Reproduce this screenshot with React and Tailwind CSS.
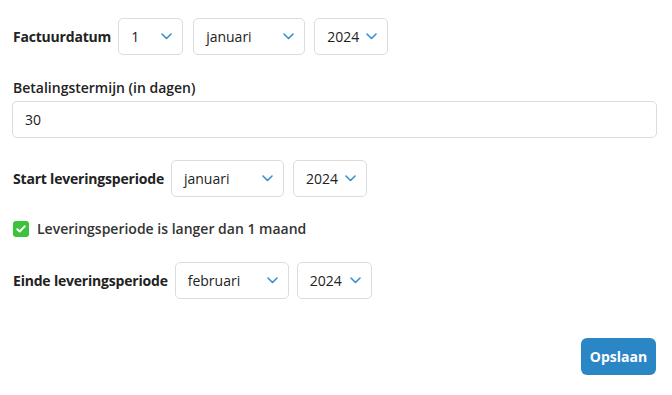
const Chevron = () => (
  <svg width="11" height="7" viewBox="0 0 11 7" className="shrink-0">
    <path d="M1 1l4.5 4.5L10 1" fill="none" stroke="#3a8fd0" strokeWidth="1.6" strokeLinecap="round" strokeLinejoin="round" />
  </svg>
);

const Select = ({ value, width }) => (
  <div
    className={`${width} h-[37px] flex items-center justify-between pl-3 pr-[10px] border border-[#dcdcdc] rounded-[5px] bg-white text-[14px] text-[#222]`}
  >
    <span>{value}</span>
    <Chevron />
  </div>
);

export default function App() {
  return (
    <div className="w-[672px] h-[395px] bg-white px-[12px] pt-[18px] font-['Open_Sans',sans-serif] text-[#222] flex flex-col">
      <div className="flex items-center">
        <span className="text-[14px] font-bold tracking-[-0.2px] ml-px mr-[7px]">Factuurdatum</span>
        <div className="flex">
          <Select value="1" width="w-[65px] mr-[10px]" />
          <Select value="januari" width="w-[112px] mr-[9px]" />
          <Select value="2024" width="w-[74px]" />
        </div>
      </div>

      <div className="mt-[22px] ml-px text-[14px] font-semibold">Betalingstermijn (in dagen)</div>
      <div className="mt-[3px] h-[37px] w-[645px] flex items-center px-3 border border-[#dcdcdc] rounded-[5px] text-[14px]">
        30
      </div>

      <div className="mt-[22px] flex items-center">
        <span className="text-[14px] font-bold tracking-[-0.2px] ml-px mr-[7px]">Start leveringsperiode</span>
        <div className="flex gap-[9px]">
          <Select value="januari" width="w-[113px]" />
          <Select value="2024" width="w-[74px]" />
        </div>
      </div>

      <div className="mt-[21px] flex items-center gap-[8px] ml-px">
        <div className="w-4 h-4 rounded-[3px] bg-[#3cc23c] flex items-center justify-center">
          <svg width="10" height="8" viewBox="0 0 10 8">
            <path d="M1.3 4.2l2.4 2.3L8.7 1.4" fill="none" stroke="white" strokeWidth="2" strokeLinecap="round" strokeLinejoin="round" />
          </svg>
        </div>
        <span className="text-[14px] font-semibold text-[#333]">Leveringsperiode is langer dan 1 maand</span>
      </div>

      <div className="mt-[23px] flex items-center">
        <span className="text-[14px] font-bold tracking-[-0.2px] ml-px mr-[7px]">Einde leveringsperiode</span>
        <div className="flex gap-[8px]">
          <Select value="februari" width="w-[114px]" />
          <Select value="2024" width="w-[75px]" />
        </div>
      </div>

      <div className="mt-[39px] flex justify-end pr-[4px]">
        <button className="h-[37px] w-[75px] rounded-[6px] bg-[#2a86c5] text-white text-[14px] font-bold">
          Opslaan
        </button>
      </div>
    </div>
  );
}
